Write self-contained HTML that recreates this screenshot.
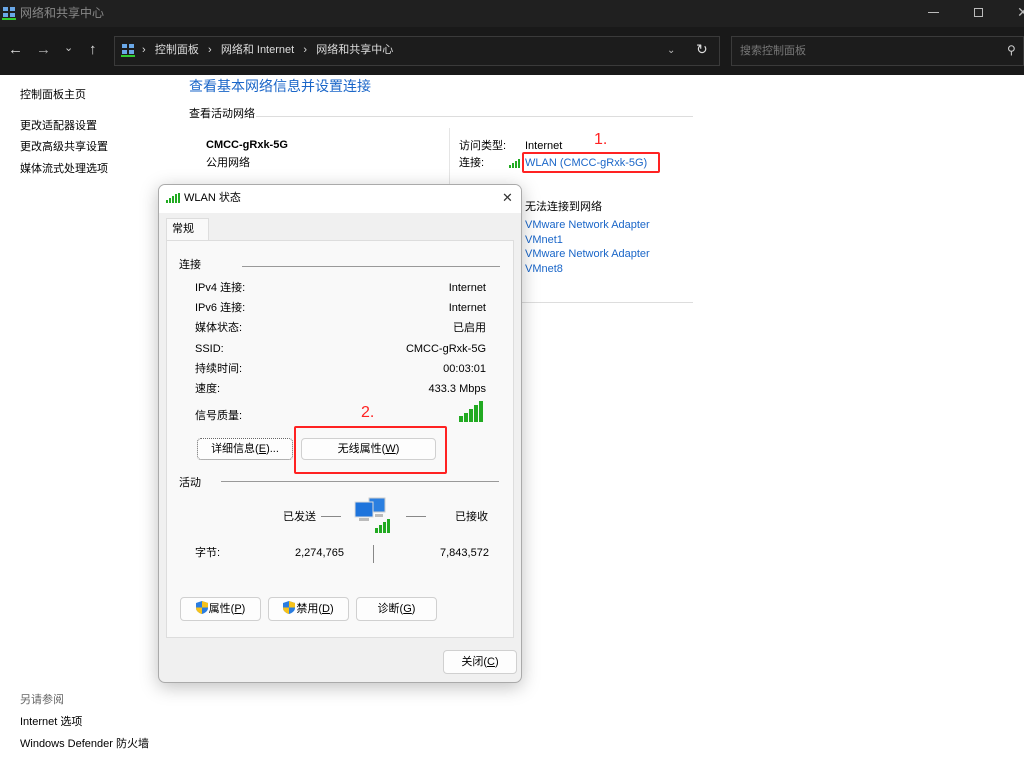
<!DOCTYPE html>
<html><head><meta charset="utf-8"><style>
*{margin:0;padding:0;box-sizing:border-box}
body{width:1024px;height:763px;background:#fff;font-family:"Liberation Sans","Noto Sans CJK SC",sans-serif;font-size:11px;line-height:13px;color:#000;position:relative;overflow:hidden}
.a{position:absolute;white-space:nowrap}
.blue{color:#1a66c8}
.btn{position:absolute;background:#fdfdfd;border:1px solid #d0d0d0;border-radius:4px;text-align:center;font-size:11px;line-height:20px}
.shield{display:inline-block;width:12px;height:13px;vertical-align:-2px;margin-right:1px}
</style></head><body>
<!-- title bar -->
<div class="a" style="left:0;top:0;width:1024px;height:27px;background:#202020"></div>
<svg class="a" style="left:2px;top:6px" width="14" height="14" viewBox="0 0 14 14"><rect x="1" y="1" width="5" height="4" fill="#6aa8e8"/><rect x="8" y="1" width="5" height="4" fill="#6aa8e8"/><rect x="1" y="7" width="5" height="4" fill="#6aa8e8"/><rect x="8" y="7" width="5" height="4" fill="#6aa8e8"/><rect x="0" y="12" width="14" height="2" fill="#3c3"/></svg>
<div class="a" style="left:20px;top:7px;color:#888;font-size:12px">网络和共享中心</div>
<div class="a" style="left:928px;top:12px;width:11px;height:1px;background:#bbb"></div>
<div class="a" style="left:974px;top:8px;width:9px;height:9px;border:1px solid #bbb"></div>
<div class="a" style="left:1017px;top:6px;color:#bbb;font-size:14px">✕</div>
<!-- nav bar -->
<div class="a" style="left:0;top:27px;width:1024px;height:48px;background:#191919"></div>
<div class="a" style="left:8px;top:43px;color:#ddd;font-size:15px">←</div>
<div class="a" style="left:36px;top:43px;color:#aaa;font-size:15px">→</div>
<div class="a" style="left:64px;top:42px;color:#ccc;font-size:11px">⌄</div>
<div class="a" style="left:89px;top:43px;color:#ddd;font-size:15px">↑</div>
<div class="a" style="left:114px;top:36px;width:606px;height:30px;border:1px solid #3a3a3a;background:#1c1c1c"></div>
<svg class="a" style="left:121px;top:43px" width="14" height="14" viewBox="0 0 14 14"><rect x="1" y="1" width="5" height="4" fill="#6aa8e8"/><rect x="8" y="1" width="5" height="4" fill="#6aa8e8"/><rect x="1" y="7" width="5" height="4" fill="#6aa8e8"/><rect x="8" y="7" width="5" height="4" fill="#6aa8e8"/><rect x="0" y="12" width="14" height="2" fill="#3c3"/></svg>
<div class="a" style="left:142px;top:44px;color:#ddd;font-size:11px">›&nbsp;&nbsp; 控制面板 &nbsp;&nbsp;›&nbsp;&nbsp; 网络和 Internet &nbsp;&nbsp;›&nbsp;&nbsp; 网络和共享中心</div>
<div class="a" style="left:667px;top:44px;color:#bbb;font-size:10px">⌄</div>
<div class="a" style="left:696px;top:43px;color:#ddd;font-size:14px">↻</div>
<div class="a" style="left:731px;top:36px;width:293px;height:30px;border:1px solid #3a3a3a;background:#1c1c1c"></div>
<div class="a" style="left:740px;top:45px;color:#777;font-size:11px">搜索控制面板</div>
<div class="a" style="left:1007px;top:44px;color:#ccc;font-size:12px">⚲</div>
<!-- left panel -->
<div class="a" style="left:20px;top:89px">控制面板主页</div>
<div class="a" style="left:20px;top:120px">更改适配器设置</div>
<div class="a" style="left:20px;top:141px">更改高级共享设置</div>
<div class="a" style="left:20px;top:163px">媒体流式处理选项</div>
<div class="a" style="left:20px;top:694px;color:#666">另请参阅</div>
<div class="a" style="left:20px;top:716px">Internet 选项</div>
<div class="a" style="left:20px;top:738px">Windows Defender 防火墙</div>
<!-- main -->
<div class="a blue" style="left:189px;top:78px;font-size:14px;line-height:16px">查看基本网络信息并设置连接</div>
<div class="a" style="left:189px;top:108px">查看活动网络</div>
<div class="a" style="left:256px;top:116px;width:437px;height:1px;background:#ddd"></div>
<div class="a" style="left:206px;top:139px;font-weight:bold">CMCC-gRxk-5G</div>
<div class="a" style="left:206px;top:157px">公用网络</div>
<div class="a" style="left:449px;top:128px;width:1px;height:60px;background:#e5e5e5"></div>
<div class="a" style="left:459px;top:140px">访问类型:</div>
<div class="a" style="left:459px;top:157px">连接:</div>
<div class="a" style="left:525px;top:140px">Internet</div>
<svg class="a" style="left:509px;top:158px" width="14" height="10"><rect x="0" y="7" width="2" height="3" fill="#2a2"/><rect x="3" y="5" width="2" height="5" fill="#2a2"/><rect x="6" y="3" width="2" height="7" fill="#2a2"/><rect x="9" y="1" width="2" height="9" fill="#2a2"/></svg>
<div class="a blue" style="left:525px;top:157px">WLAN (CMCC-gRxk-5G)</div>
<div class="a" style="left:522px;top:152px;width:138px;height:21px;border:2px solid #f22;border-radius:2px"></div>
<div class="a" style="left:594px;top:131px;color:#f22;font-size:16px;line-height:18px">1.</div>
<div class="a" style="left:525px;top:201px">无法连接到网络</div>
<div class="a blue" style="left:525px;top:218px;line-height:14.7px">VMware Network Adapter<br>VMnet1<br>VMware Network Adapter<br>VMnet8</div>
<div class="a" style="left:522px;top:302px;width:171px;height:1px;background:#ddd"></div>
<!-- dialog -->
<div class="a" style="left:158px;top:184px;width:364px;height:499px;background:#f0f0f0;border:1px solid #aaa;border-radius:7px;box-shadow:0 4px 18px rgba(0,0,0,.25);overflow:hidden">
 <div class="a" style="left:0;top:0;width:364px;height:28px;background:#fff"></div>
 <svg class="a" style="left:7px;top:8px" width="14" height="10"><rect x="0" y="7" width="2" height="3" fill="#2a2"/><rect x="3" y="5" width="2" height="5" fill="#2a2"/><rect x="6" y="3" width="2" height="7" fill="#2a2"/><rect x="9" y="1" width="2" height="9" fill="#2a2"/><rect x="12" y="0" width="2" height="10" fill="#2a2"/></svg>
 <div class="a" style="left:25px;top:7px">WLAN 状态</div>
 <div class="a" style="left:343px;top:6px;font-size:13px;color:#333">✕</div>
 <div class="a" style="left:7px;top:33px;width:43px;height:23px;background:#f9f9f9;border:1px solid #ddd;border-bottom:none"></div>
 <div class="a" style="left:13px;top:38px">常规</div>
 <div class="a" style="left:7px;top:55px;width:348px;height:398px;background:#f9f9f9;border:1px solid #ddd"></div>
 <div class="a" style="left:20px;top:74px">连接</div>
 <div class="a" style="left:83px;top:81px;width:258px;height:1px;background:#999"></div>
 <div class="a" style="left:36px;top:93px;line-height:20.2px">IPv4 连接:<br>IPv6 连接:<br>媒体状态:<br>SSID:<br>持续时间:<br>速度:</div>
 <div class="a" style="right:35px;top:93px;line-height:20.2px;text-align:right">Internet<br>Internet<br>已启用<br>CMCC-gRxk-5G<br>00:03:01<br>433.3 Mbps</div>
 <div class="a" style="left:36px;top:225px">信号质量:</div>
 <svg class="a" style="left:300px;top:216px" width="27" height="21"><rect x="0" y="15" width="4" height="6" fill="#2a2"/><rect x="5" y="12" width="4" height="9" fill="#2a2"/><rect x="10" y="8" width="4" height="13" fill="#2a2"/><rect x="15" y="4" width="4" height="17" fill="#2a2"/><rect x="20" y="0" width="4" height="21" fill="#2a2"/></svg>
 <div class="btn" style="left:38px;top:253px;width:96px;height:22px;border:1px dotted #666">详细信息(<u>E</u>)...</div>
 <div class="btn" style="left:142px;top:253px;width:135px;height:22px">无线属性(<u>W</u>)</div>
 <div class="a" style="left:20px;top:292px">活动</div>
 <div class="a" style="left:62px;top:296px;width:278px;height:1px;background:#999"></div>
 <div class="a" style="left:124px;top:326px">已发送</div>
 <div class="a" style="left:162px;top:331px;width:20px;height:1px;background:#888"></div>
 <svg class="a" style="left:194px;top:311px" width="42" height="38"><rect x="16" y="2" width="16" height="14" fill="#2b7fe0" stroke="#ccc"/><rect x="2" y="6" width="18" height="15" fill="#1e74dc" stroke="#ddd"/><rect x="6" y="22" width="10" height="3" fill="#bbb"/><rect x="22" y="18" width="8" height="3" fill="#bbb"/><rect x="22" y="32" width="3" height="5" fill="#2a2"/><rect x="26" y="29" width="3" height="8" fill="#2a2"/><rect x="30" y="26" width="3" height="11" fill="#2a2"/><rect x="34" y="23" width="3" height="14" fill="#2a2"/></svg>
 <div class="a" style="left:247px;top:331px;width:20px;height:1px;background:#888"></div>
 <div class="a" style="left:296px;top:326px">已接收</div>
 <div class="a" style="left:36px;top:362px">字节:</div>
 <div class="a" style="left:136px;top:362px">2,274,765</div>
 <div class="a" style="left:214px;top:360px;width:1px;height:18px;background:#888"></div>
 <div class="a" style="left:281px;top:362px">7,843,572</div>
 <div class="btn" style="left:21px;top:412px;width:81px;height:24px;line-height:22px"><svg class="shield" viewBox="0 0 12 13"><path d="M6 0L12 2V7C12 10 9 12 6 13C3 12 0 10 0 7V2Z" fill="#2a7de0"/><path d="M6 0L12 2V6.5H6V13C3 12 0 10 0 7V6.5H6Z" fill="#f6c21b"/></svg>属性(<u>P</u>)</div>
 <div class="btn" style="left:109px;top:412px;width:81px;height:24px;line-height:22px"><svg class="shield" viewBox="0 0 12 13"><path d="M6 0L12 2V7C12 10 9 12 6 13C3 12 0 10 0 7V2Z" fill="#2a7de0"/><path d="M6 0L12 2V6.5H6V13C3 12 0 10 0 7V6.5H6Z" fill="#f6c21b"/></svg>禁用(<u>D</u>)</div>
 <div class="btn" style="left:197px;top:412px;width:81px;height:24px;line-height:22px">诊断(<u>G</u>)</div>
 <div class="btn" style="left:284px;top:465px;width:74px;height:24px;line-height:22px">关闭(<u>C</u>)</div>
</div>
<div class="a" style="left:294px;top:426px;width:153px;height:48px;border:2px solid #f22;border-radius:2px"></div>
<div class="a" style="left:361px;top:404px;color:#f22;font-size:16px;line-height:18px">2.</div>
</body></html>
